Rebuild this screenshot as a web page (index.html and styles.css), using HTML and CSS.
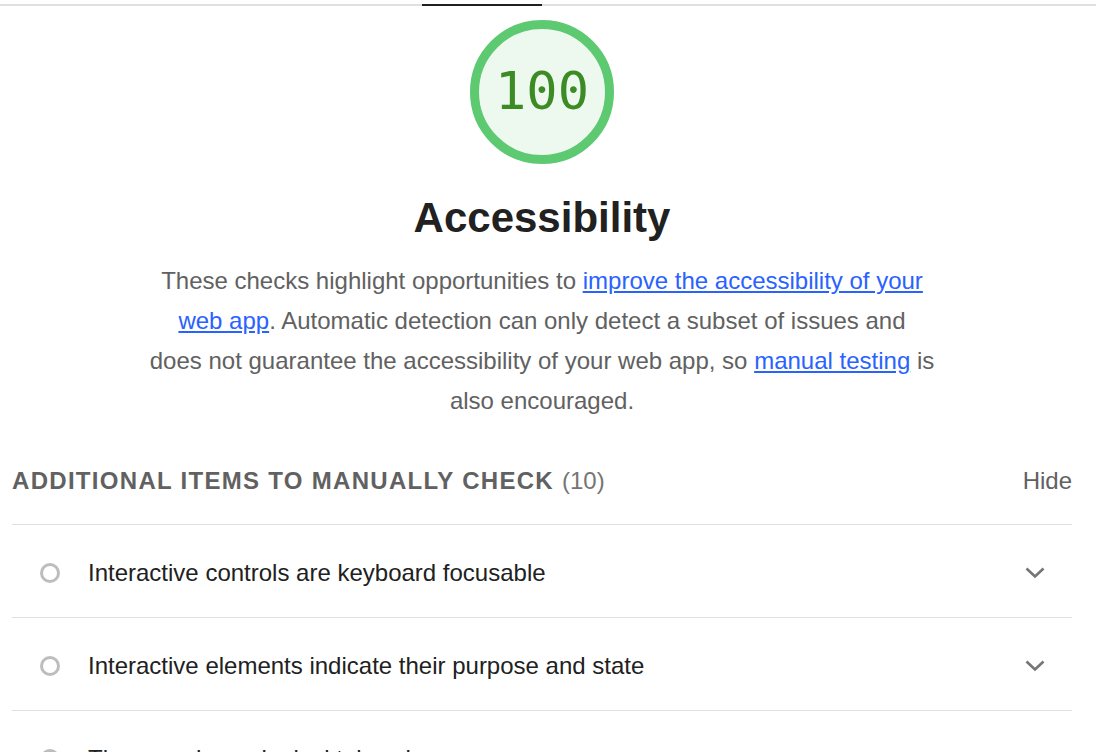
FILE: index.html
```html
<!DOCTYPE html>
<html lang="en">
<head>
<meta charset="utf-8">
<title>Accessibility</title>
<link rel="stylesheet" href="styles.css">
</head>
<body>
<div class="tabbar"><div class="tab-indicator"></div></div>
<main class="page">
  <header class="category-header">
    <div class="gauge">
      <svg class="gauge-svg" width="144" height="144" viewBox="0 0 144 144">
        <circle cx="72" cy="72" r="67.5" fill="#edf8ef" stroke="#5dc971" stroke-width="9"/>
      </svg>
      <span class="gauge-value">100</span>
    </div>
    <h1 class="category-title">Accessibility</h1>
    <p class="category-desc">These checks highlight opportunities to <a href="#">improve the accessibility of your web app</a>. Automatic detection can only detect a subset of issues and does not guarantee the accessibility of your web app, so <a href="#">manual testing</a> is also encouraged.</p>
  </header>

  <section class="group">
    <div class="group-header">
      <div class="group-title">Additional items to manually check <span class="group-count">(10)</span></div>
      <div class="group-toggle">Hide</div>
    </div>
    <div class="audit">
      <span class="audit-icon"></span>
      <span class="audit-title">Interactive controls are keyboard focusable</span>
      <svg class="chevron" width="20" height="12" viewBox="0 0 20 12"><path d="M1.5 1.5 L10 9.5 L18.5 1.5" fill="none" stroke="#757575" stroke-width="2.6"/></svg>
    </div>
    <div class="audit">
      <span class="audit-icon"></span>
      <span class="audit-title">Interactive elements indicate their purpose and state</span>
      <svg class="chevron" width="20" height="12" viewBox="0 0 20 12"><path d="M1.5 1.5 L10 9.5 L18.5 1.5" fill="none" stroke="#757575" stroke-width="2.6"/></svg>
    </div>
    <div class="audit">
      <span class="audit-icon"></span>
      <span class="audit-title">The page has a logical tab order</span>
      <svg class="chevron" width="20" height="12" viewBox="0 0 20 12"><path d="M1.5 1.5 L10 9.5 L18.5 1.5" fill="none" stroke="#757575" stroke-width="2.6"/></svg>
    </div>
  </section>
</main>
</body>
</html>
```

FILE: styles.css
```css
html, body {
  margin: 0;
  padding: 0;
  background: #ffffff;
}

body {
  font-family: "Liberation Sans", Arial, Helvetica, sans-serif;
  color: #212121;
  overflow: hidden;
}

.tabbar {
  margin-top: 4px;
  height: 2px;
  background: #e0e0e0;
  display: flex;
}

.tab-indicator {
  margin-left: 422px;
  width: 120px;
  height: 2px;
  background: #202124;
}

.page {
  padding: 0 24px 0 12px;
}

.category-header {
  display: flex;
  flex-direction: column;
  align-items: center;
}

.gauge {
  margin-top: 14px;
  width: 144px;
  height: 144px;
  display: grid;
  place-items: center;
}

.gauge-svg,
.gauge-value {
  grid-area: 1 / 1;
}

.gauge-value {
  font-family: "DejaVu Sans Mono", "Liberation Mono", monospace;
  font-size: 52px;
  line-height: 1;
  color: #3d8b24;
  position: relative;
  top: -1px;
}

.category-title {
  margin: 30px 0 0;
  font-size: 42px;
  line-height: 48px;
  font-weight: 700;
  color: #212121;
}

.category-desc {
  margin: 19px 0 0;
  max-width: 785px;
  text-align: center;
  font-size: 24px;
  line-height: 40px;
  color: #616161;
}

.category-desc a {
  color: #2962ff;
  text-decoration: underline;
}

.group {
  margin-top: 45px;
}

.group-header {
  display: flex;
  justify-content: space-between;
  align-items: center;
  height: 30px;
  padding-bottom: 28px;
  border-bottom: 1px solid #e0e0e0;
}

.group-title {
  font-size: 24px;
  font-weight: 700;
  text-transform: uppercase;
  letter-spacing: 1.3px;
  color: #616161;
}

.group-count {
  font-weight: 400;
  letter-spacing: 0;
  color: #757575;
}

.group-toggle {
  font-size: 24px;
  color: #616161;
}

.audit {
  box-sizing: border-box;
  display: flex;
  align-items: center;
  height: 93px;
  border-bottom: 1px solid #e0e0e0;
  padding: 4px 27px 0 28px;
}

.audit-icon {
  flex: none;
  width: 14px;
  height: 14px;
  border: 3px solid #bdbdbd;
  border-radius: 50%;
  margin-right: 28px;
}

.audit-title {
  flex: 1;
  font-size: 24px;
  color: #212121;
}

.chevron {
  flex: none;
}
```
